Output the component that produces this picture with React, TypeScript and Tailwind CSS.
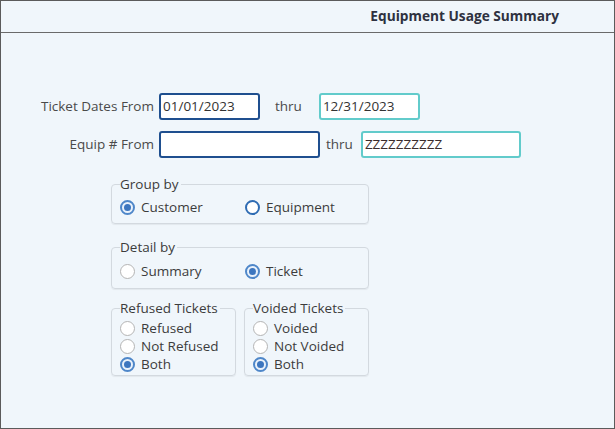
import React from "react";

type RadioKind = "checked" | "blue" | "gray";

function Radio({ kind }: { kind: RadioKind }) {
  if (kind === "checked") {
    return (
      <span className="flex h-[15px] w-[15px] shrink-0 items-center justify-center rounded-full border-2 border-[#4f87c9] bg-[#eaf2fb]">
        <span className="h-[7px] w-[7px] rounded-full bg-[#3d76bf]" />
      </span>
    );
  }
  if (kind === "blue") {
    return <span className="h-[15px] w-[15px] shrink-0 rounded-full border-2 border-[#2f6cb3] bg-white" />;
  }
  return <span className="h-[15px] w-[15px] shrink-0 rounded-full border-[1.5px] border-[#b4b4b4] bg-white" />;
}

function Option({ kind, label, className = "" }: { kind: RadioKind; label: string; className?: string }) {
  return (
    <div className={`flex h-[18px] items-center gap-[6px] ${className}`}>
      <Radio kind={kind} />
      <span className="text-[13.5px] leading-[18px] text-[#3c3c3c]">{label}</span>
    </div>
  );
}

function Box({ legend, children, className = "" }: { legend: string; children: React.ReactNode; className?: string }) {
  return (
    <fieldset className={`rounded-[4px] border border-[#d3d9df] px-[8px] shadow-[0_1px_1px_rgba(0,0,0,0.06)] ${className}`}>
      <legend className="pr-[2px] text-[13.5px] leading-[18px] text-[#3c3c3c]">{legend}</legend>
      {children}
    </fieldset>
  );
}

export default function App() {
  return (
    <div
      className="flex h-[429px] w-[615px] flex-col border border-[#5b5b5b] bg-[#f0f6fb]"
      style={{ fontFamily: '"Open Sans", "Noto Sans", sans-serif' }}
    >
      <div className="flex h-[32px] shrink-0 items-center justify-end border-b-[1.5px] border-[#6a6a6a] pr-[55px]">
        <span className="text-[13.7px] font-bold text-[#2e3140]">Equipment Usage Summary</span>
      </div>

      <div className="flex flex-col pt-[60px]">
        {/* Row 1 */}
        <div className="flex h-[27px] items-center">
          <div className="w-[154px] pr-[1px] text-right text-[13.5px] text-[#4a4a4a]">Ticket Dates From</div>
          <div className="ml-[4px] flex h-[27px] w-[101px] items-center rounded-[3px] border-2 border-[#1f4f8f] bg-white pl-[2px] text-[13.5px] text-[#333]">
            01/01/2023
          </div>
          <span className="ml-[15px] text-[13.5px] text-[#4a4a4a]">thru</span>
          <div className="ml-[17px] flex h-[27px] w-[101px] items-center rounded-[3px] border-2 border-[#62cbcb] bg-white pl-[2px] text-[13.5px] text-[#333]">
            12/31/2023
          </div>
        </div>

        {/* Row 2 */}
        <div className="mt-[11px] flex h-[27px] items-center">
          <div className="w-[154px] pr-[1px] text-right text-[13.5px] text-[#4a4a4a]">Equip # From</div>
          <div className="ml-[4px] h-[27px] w-[161px] rounded-[3px] border-2 border-[#1f4f8f] bg-white" />
          <span className="ml-[6px] text-[13.5px] text-[#4a4a4a]">thru</span>
          <div className="ml-[8px] flex h-[27px] w-[160px] items-center rounded-[3px] border-2 border-[#62cbcb] bg-white pl-[2px] text-[13.5px] text-[#3a2c2c]">
            ZZZZZZZZZZ
          </div>
        </div>

        {/* Groups */}
        <div className="ml-[110px] mt-[17px] flex w-[258px] flex-col">
          <Box legend="Group by" className="pb-[6px]">
            <div className="flex h-[24px] items-center pt-[4px]">
              <Option kind="checked" label="Customer" className="w-[125px]" />
              <Option kind="blue" label="Equipment" />
            </div>
          </Box>

          <Box legend="Detail by" className="mt-[14px] pb-[7px]">
            <div className="flex h-[25px] items-center pt-[5px]">
              <Option kind="gray" label="Summary" className="w-[125px]" />
              <Option kind="checked" label="Ticket" />
            </div>
          </Box>

          <div className="mt-[10px] flex gap-[8px]">
            <Box legend="Refused Tickets" className="w-[125px] pb-[2px]">
              <div className="flex flex-col pt-[2px]">
                <Option kind="gray" label="Refused" />
                <Option kind="gray" label="Not Refused" />
                <Option kind="checked" label="Both" />
              </div>
            </Box>
            <Box legend="Voided Tickets" className="w-[125px] pb-[2px]">
              <div className="flex flex-col pt-[2px]">
                <Option kind="gray" label="Voided" />
                <Option kind="gray" label="Not Voided" />
                <Option kind="checked" label="Both" />
              </div>
            </Box>
          </div>
        </div>
      </div>
    </div>
  );
}
